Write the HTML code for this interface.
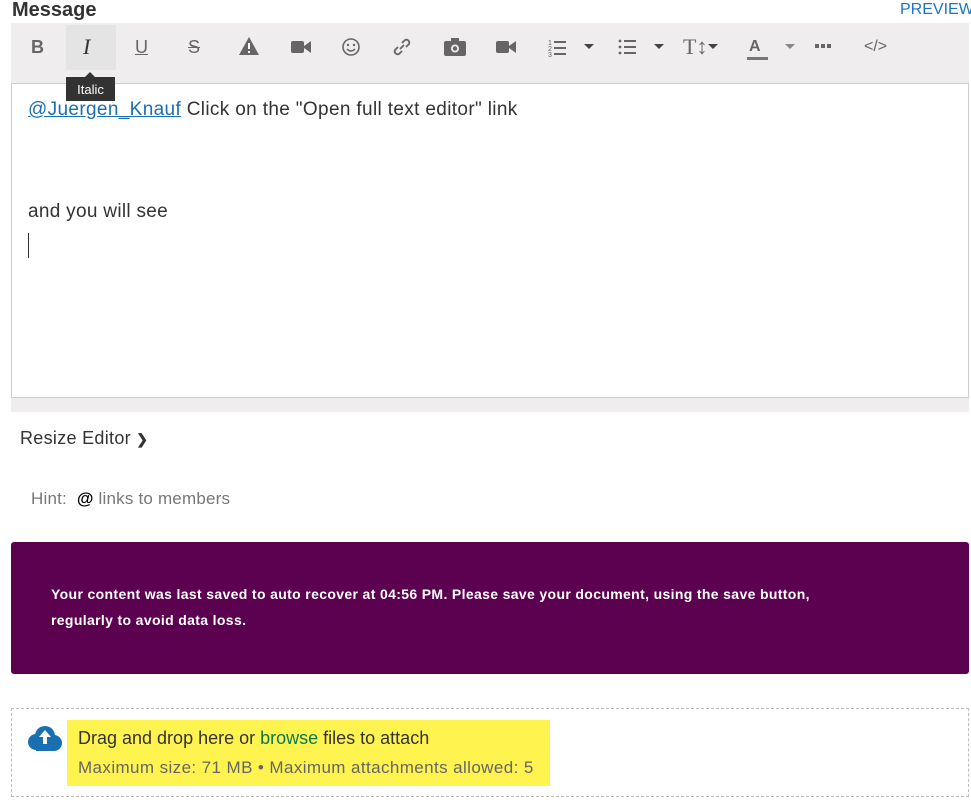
<!DOCTYPE html>
<html><head><style>
body{margin:0;width:971px;height:806px;background:#fff;font-family:"Liberation Sans",sans-serif;position:relative;overflow:hidden;color:#333}
.a{position:absolute}
.ic{position:absolute;top:37px;height:20px;color:#666;font-size:17px;text-align:center;line-height:20px}
</style></head><body>
<div class="a" style="left:12px;top:-1px;font-weight:bold;font-size:20px;color:#333">Message</div>
<div class="a" style="left:900px;top:1px;font-size:16px;color:#1a73c8">PREVIEW</div>
<div class="a" style="left:11px;top:23px;width:958px;height:60px;background:#efedee;border-bottom:1px solid #ccc"></div>
<div class="a" style="left:66px;top:25px;width:50px;height:45px;background:#e4e4e4"></div>
<div class="ic" style="left:31px;font-weight:bold;font-size:18px">B</div>
<div class="ic" style="left:83px;font-family:'Liberation Serif';font-style:italic;font-size:22px;color:#333">I</div>
<div class="ic" style="left:135px;text-decoration:underline;font-size:18px">U</div>
<div class="ic" style="left:188px;text-decoration:line-through;font-size:18px">S</div>
<svg class="a" style="left:238px;top:36px" width="22" height="20"><path d="M11 1L21 19H1Z" fill="#666"/><rect x="10" y="7" width="2" height="6" fill="#fff"/><rect x="10" y="15" width="2" height="2" fill="#fff"/></svg>
<svg class="a" style="left:291px;top:40px" width="20" height="14"><rect x="0" y="1" width="13" height="12" rx="2" fill="#666"/><path d="M13 6L20 1V13L13 8Z" fill="#666"/></svg>
<svg class="a" style="left:341px;top:37px" width="20" height="20"><circle cx="10" cy="10" r="8" fill="none" stroke="#666" stroke-width="1.6"/><circle cx="7" cy="8" r="1.2" fill="#666"/><circle cx="13" cy="8" r="1.2" fill="#666"/><path d="M6 12Q10 16 14 12" fill="none" stroke="#666" stroke-width="1.5"/></svg>
<svg class="a" style="left:392px;top:37px" width="20" height="20"><path d="M8 12L12 8M6 10L3 13a3 3 0 0 0 4 4l3-3M14 10l3-3a3 3 0 0 0-4-4l-3 3" fill="none" stroke="#666" stroke-width="1.8"/></svg>
<svg class="a" style="left:444px;top:37px" width="22" height="20"><rect x="0" y="4" width="22" height="15" rx="2" fill="#666"/><rect x="7" y="1" width="8" height="4" fill="#666"/><circle cx="11" cy="11.5" r="4" fill="#efedee"/><circle cx="11" cy="11.5" r="2.2" fill="#666"/></svg>
<svg class="a" style="left:496px;top:40px" width="20" height="14"><rect x="0" y="1" width="13" height="12" rx="2" fill="#666"/><path d="M13 6L20 1V13L13 8Z" fill="#666"/></svg>
<svg class="a" style="left:548px;top:37px" width="20" height="20"><text x="0" y="8" font-size="7" fill="#666">1</text><text x="0" y="14" font-size="7" fill="#666">2</text><text x="0" y="20" font-size="7" fill="#666">3</text><rect x="6" y="4" width="12" height="2" fill="#666"/><rect x="6" y="10" width="12" height="2" fill="#666"/><rect x="6" y="16" width="12" height="2" fill="#666"/></svg>
<svg class="a" style="left:584px;top:44px" width="10" height="6"><path d="M0 0H10L5 5Z" fill="#444"/></svg>
<svg class="a" style="left:618px;top:38px" width="20" height="18"><circle cx="2" cy="3" r="1.4" fill="#666"/><circle cx="2" cy="9" r="1.4" fill="#666"/><circle cx="2" cy="15" r="1.4" fill="#666"/><rect x="6" y="2" width="12" height="2" fill="#666"/><rect x="6" y="8" width="12" height="2" fill="#666"/><rect x="6" y="14" width="12" height="2" fill="#666"/></svg>
<svg class="a" style="left:654px;top:44px" width="10" height="6"><path d="M0 0H10L5 5Z" fill="#444"/></svg>
<div class="ic" style="left:683px;font-family:'Liberation Serif';font-size:22px;color:#666">T↕</div>
<svg class="a" style="left:708px;top:44px" width="10" height="6"><path d="M0 0H10L5 5Z" fill="#444"/></svg>
<div class="ic" style="left:749px;font-weight:bold;font-size:16px">A</div>
<div class="a" style="left:747px;top:57px;width:21px;height:3px;background:#777"></div>
<svg class="a" style="left:785px;top:44px" width="10" height="6"><path d="M0 0H10L5 5Z" fill="#888"/></svg>
<svg class="a" style="left:815px;top:44px" width="18" height="4"><rect x="0" y="0" width="4" height="4" fill="#666"/><rect x="6" y="0" width="4" height="4" fill="#666"/><rect x="12" y="0" width="4" height="4" fill="#666"/></svg>
<div class="ic" style="left:864px;font-size:16px">&lt;/&gt;</div>
<div class="a" style="top:66px;width:0;height:0;border:6px solid transparent;border-bottom-color:#333;left:84px"></div>
<div class="a" style="left:66px;top:77px;width:49px;height:24px;background:#333;color:#fff;font-size:13px;line-height:25px;text-align:center">Italic</div>
<div class="a" style="left:11px;top:84px;width:956px;height:313px;border:1px solid #ccc;border-top:none"></div>
<div class="a" style="left:11px;top:398px;width:958px;height:14px;background:#efedee"></div>
<div class="a" style="left:28px;top:99px;font-size:19px;letter-spacing:0.35px;color:#333"><span style="color:#1a6fb0;text-decoration:underline">@Juergen_Knauf</span> Click on the "Open full text editor" link</div>
<div class="a" style="left:28px;top:201px;font-size:19px;letter-spacing:0.3px;color:#333">and you will see</div>
<div class="a" style="left:28px;top:233px;width:1px;height:25px;background:#333"></div>
<div class="a" style="left:20px;top:428px;font-size:18px;letter-spacing:0.3px;color:#333">Resize Editor <span style="font-size:14px;font-weight:bold">&#10095;</span></div>
<div class="a" style="left:31px;top:489px;font-size:17px;letter-spacing:0.2px;color:#777">Hint: &nbsp;<b style="color:#000">@</b> links to members</div>
<div class="a" style="left:11px;top:542px;width:958px;height:132px;background:#5c0050;border-radius:3px"></div>
<div class="a" style="left:51px;top:581px;font-size:14px;letter-spacing:0.35px;font-weight:bold;color:#fff;line-height:26px">Your content was last saved to auto recover at 04:56 PM. Please save your document, using the save button,<br>regularly to avoid data loss.</div>
<div class="a" style="left:11px;top:708px;width:956px;height:87px;border:1px dashed #bbb"></div>
<svg class="a" style="left:24px;top:723px" width="40" height="32"><circle cx="12" cy="19" r="8" fill="#1a6fb0"/><circle cx="21" cy="13" r="10" fill="#1a6fb0"/><circle cx="30" cy="20" r="8" fill="#1a6fb0"/><rect x="12" y="18" width="18" height="10" fill="#1a6fb0"/><path d="M21 7L27 14H23V21H19V14H15Z" fill="#fff"/></svg>
<div class="a" style="left:67px;top:720px;width:483px;height:66px;background:#fff350"></div>
<div class="a" style="left:78px;top:728px;font-size:18px;color:#333">Drag and drop here or <span style="color:#0a7a4a">browse</span> files to attach</div>
<div class="a" style="left:78px;top:758px;font-size:17px;letter-spacing:0.4px;color:#666">Maximum size: 71 MB • Maximum attachments allowed: 5</div>
</body></html>
